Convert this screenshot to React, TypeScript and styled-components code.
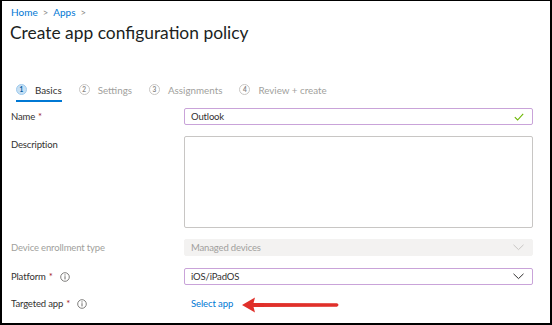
import React from "react";
import styled, { createGlobalStyle } from "styled-components";

const Global = createGlobalStyle`
  html, body { margin: 0; padding: 0; background: #fff; }
  body { font-family: "Lato", "Open Sans", sans-serif; }
  * { box-sizing: border-box; }
`;

const Frame = styled.div`
  width: 552px;
  height: 325px;
  border: 2px solid #000;
  border-top-width: 1px;
  background: #fff;
  padding: 4px 17px 0 9px;
  overflow: hidden;
  color: #323130;
`;

const Breadcrumb = styled.nav`
  display: flex;
  align-items: center;
  gap: 5px;
  height: 14px;
  font-size: 10px;
  color: #0078d4;
`;

const Crumb = styled.span`
  color: #0078d4;
`;

const Sep = styled.span`
  color: #8a8886;
  font-size: 9.5px;
  display: flex;
  align-items: center;
`;

const Title = styled.h1`
  margin: 3px 0 0 -1px;
  font-size: 17.4px;
  font-weight: 400;
  line-height: 22px;
  color: #201f1e;
`;

const Steps = styled.div`
  display: flex;
  align-items: flex-start;
  gap: 17px;
  margin: 35px 0 0 5px;
  height: 24px;
`;

const Step = styled.div<{ $active?: boolean }>`
  display: flex;
  align-items: center;
  gap: 8px;
  height: 23px;
  border-bottom: 2px solid ${(p) => (p.$active ? "#0078d4" : "transparent")};
  font-size: 9.8px;
  color: ${(p) => (p.$active ? "#323130" : "#a19f9d")};
`;

const Circle = styled.span<{ $active?: boolean }>`
  width: 11px;
  height: 11px;
  border-radius: 50%;
  display: flex;
  align-items: center;
  justify-content: center;
  font-size: 6.5px;
  font-weight: 700;
  border: 1px solid ${(p) => (p.$active ? "#9fcbee" : "#c8c6c4")};
  background: ${(p) => (p.$active ? "#c7e0f4" : "#fff")};
  color: ${(p) => (p.$active ? "#005a9e" : "#8a8886")};
`;

const Form = styled.div`
  display: flex;
  flex-direction: column;
  margin: 5px 0 0 0;
`;

const Row = styled.div<{ $gap?: number }>`
  display: grid;
  grid-template-columns: 173px 349px;
  align-items: start;
  margin-top: ${(p) => p.$gap ?? 0}px;
`;

const Label = styled.div<{ $disabled?: boolean }>`
  display: flex;
  align-items: center;
  gap: 4px;
  height: 17px;
  font-size: 9.5px;
  letter-spacing: -0.15px;
  color: ${(p) => (p.$disabled ? "#a19f9d" : "#323130")};
`;

const Star = styled.span`
  color: #a4262c;
  margin-left: -1px;
`;

const Info = styled.span`
  display: inline-flex;
  margin-left: 3px;
`;

const Field = styled.div<{ $variant?: "focus" | "disabled" | "plain" }>`
  height: ${(p) => (p.$variant === "plain" ? "92px" : "17px")};
  display: flex;
  align-items: center;
  justify-content: space-between;
  padding: 0 8px 0 6px;
  border-radius: 2px;
  font-size: 9.5px;
  letter-spacing: -0.15px;
  border: 1px solid
    ${(p) =>
      p.$variant === "focus"
        ? "#c9a3d9"
        : p.$variant === "disabled"
        ? "#f3f2f1"
        : "#c8c6c4"};
  background: ${(p) => (p.$variant === "disabled" ? "#f3f2f1" : "#fff")};
  color: ${(p) => (p.$variant === "disabled" ? "#a19f9d" : "#323130")};
`;

const LinkRow = styled.div`
  display: flex;
  align-items: center;
  height: 17px;
  padding-left: 7px;
  gap: 9px;
`;

const Link = styled.span`
  color: #0078d4;
  font-size: 9.5px;
  letter-spacing: -0.1px;
`;

const Chevron = ({ color }: { color: string }) => (
  <svg width="11" height="7" viewBox="0 0 11 7">
    <path d="M0.5 0.8 L5.5 5.6 L10.5 0.8" fill="none" stroke={color} strokeWidth="1" />
  </svg>
);

const Check = () => (
  <svg width="10" height="8" viewBox="0 0 10 8">
    <path d="M0.8 4.2 L3.6 7 L9.2 0.8" fill="none" stroke="#6bb700" strokeWidth="1.1" />
  </svg>
);

const InfoIcon = () => (
  <svg width="10" height="10" viewBox="0 0 10 10">
    <circle cx="5" cy="5" r="4.3" fill="none" stroke="#605e5c" strokeWidth="0.8" />
    <rect x="4.55" y="4.2" width="0.9" height="3.2" fill="#605e5c" />
    <circle cx="5" cy="2.9" r="0.55" fill="#605e5c" />
  </svg>
);

const Arrow = () => (
  <svg width="100" height="18" viewBox="0 0 100 18" style={{ marginTop: 3 }}>
    <path d="M11 7 L95 7.3 Q98 9 95 10.7 L11 11 Z" fill="#e0302a" />
    <path d="M0 9 L13 1.5 L11 9 L13 16.5 Z" fill="#e0302a" />
  </svg>
);

const steps = ["Basics", "Settings", "Assignments", "Review + create"];

export default function App() {
  return (
    <>
      <Global />
      <Frame>
        <Breadcrumb>
          <Crumb>Home</Crumb>
          <Sep>&gt;</Sep>
          <Crumb>Apps</Crumb>
          <Sep>&gt;</Sep>
        </Breadcrumb>
        <Title>Create app configuration policy</Title>
        <Steps>
          {steps.map((s, i) => (
            <Step key={s} $active={i === 0}>
              <Circle $active={i === 0}>{i + 1}</Circle>
              {s}
            </Step>
          ))}
        </Steps>
        <Form>
          <Row>
            <Label>
              Name <Star>*</Star>
            </Label>
            <Field $variant="focus">
              <span>Outlook</span>
              <Check />
            </Field>
          </Row>
          <Row $gap={11}>
            <Label>Description</Label>
            <Field $variant="plain" />
          </Row>
          <Row $gap={11}>
            <Label $disabled>Device enrollment type</Label>
            <Field $variant="disabled">
              <span>Managed devices</span>
              <Chevron color="#c8c6c4" />
            </Field>
          </Row>
          <Row $gap={12}>
            <Label>
              Platform <Star>*</Star>
              <Info>
                <InfoIcon />
              </Info>
            </Label>
            <Field $variant="focus">
              <span>iOS/iPadOS</span>
              <Chevron color="#323130" />
            </Field>
          </Row>
          <Row $gap={10}>
            <Label>
              Targeted app <Star>*</Star>
              <Info>
                <InfoIcon />
              </Info>
            </Label>
            <LinkRow>
              <Link>Select app</Link>
              <Arrow />
            </LinkRow>
          </Row>
        </Form>
      </Frame>
    </>
  );
}
